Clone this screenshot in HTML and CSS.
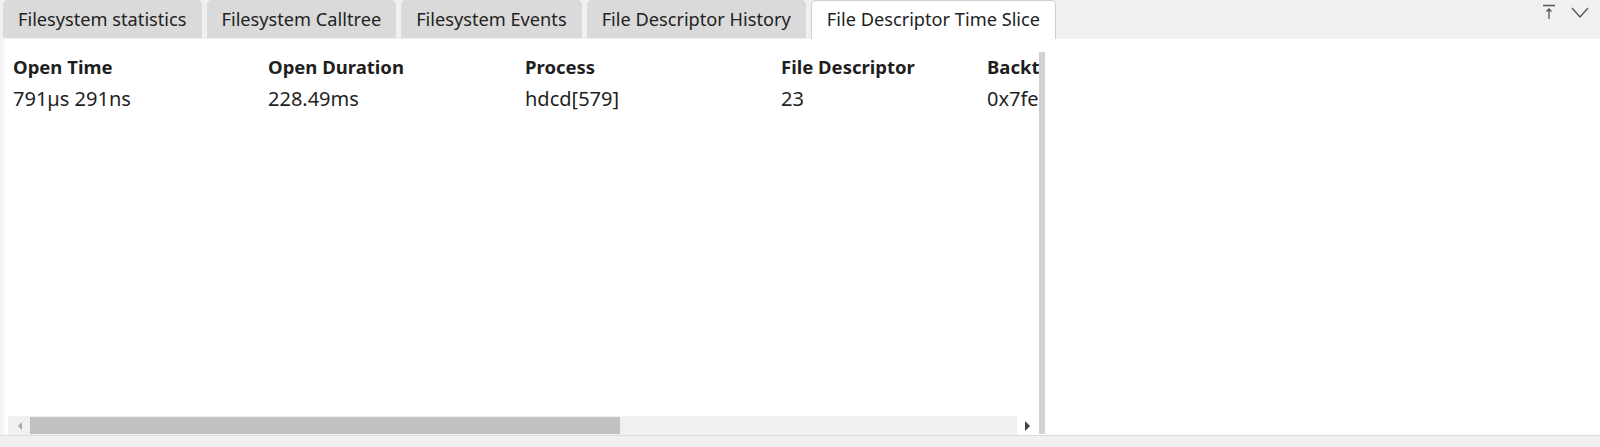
FILE: index.html
```html
<!DOCTYPE html>
<html>
<head>
<meta charset="utf-8">
<link rel="stylesheet" href="styles.css">
</head>
<body>
<div class="tabbar">
  <div class="tab">Filesystem statistics</div>
  <div class="tab">Filesystem Calltree</div>
  <div class="tab">Filesystem Events</div>
  <div class="tab">File Descriptor History</div>
  <div class="tab active">File Descriptor Time Slice</div>
  <div class="tools">
    <svg width="18" height="18" viewBox="0 0 18 18"><path d="M3 2.5h12M9 16V6M6.5 8.5L9 6l2.5 2.5" fill="none" stroke="#555" stroke-width="1.3"/></svg>
    <svg width="20" height="18" viewBox="0 0 20 18"><path d="M2 5l8 9 8-9" fill="none" stroke="#555" stroke-width="1.3"/></svg>
  </div>
</div>
<div class="main">
  <div class="edge"></div>
  <div class="pane">
    <div class="table">
      <div class="row head">
        <div class="c c1">Open Time</div>
        <div class="c c2">Open Duration</div>
        <div class="c c3">Process</div>
        <div class="c c4">File Descriptor</div>
        <div class="c c5">Backt</div>
      </div>
      <div class="row">
        <div class="c c1">791µs 291ns</div>
        <div class="c c2">228.49ms</div>
        <div class="c c3">hdcd[579]</div>
        <div class="c c4">23</div>
        <div class="c c5">0x7fe</div>
      </div>
    </div>
    <div class="hscroll">
      <div class="arrow left"></div>
      <div class="thumb"></div>
      <div class="rest"></div>
      <div class="arrow right"></div>
    </div>
  </div>
  <div class="splitter"></div>
  <div class="right"></div>
</div>
<div class="status"></div>
</body>
</html>
```
FILE: styles.css
```css
html, body {
  margin: 0;
  padding: 0;
  background: #ffffff;
  width: 1600px;
  height: 447px;
  overflow: hidden;
  font-family: "Noto Sans", "Open Sans", sans-serif;
  color: #1f1f1f;
}
.tabbar {
  height: 39px;
  background: #f0f0f0;
  display: flex;
  align-items: flex-start;
  padding-left: 3px;
  gap: 5px;
  box-sizing: border-box;
}
.tab {
  height: 38px;
  box-sizing: border-box;
  background: #dadada;
  border-radius: 5px 5px 0 0;
  padding: 0 15px;
  font-size: 18.2px;
  line-height: 38px;
  color: #222;
  white-space: nowrap;
}
.tab.active {
  background: #ffffff;
  height: 39px;
  border: 1px solid #cfcfcf;
  border-bottom: none;
  line-height: 37px;
  padding: 0 15px;
}
.tools {
  margin-left: auto;
  display: flex;
  gap: 12px;
  padding: 3px 10px 0 0;
}
.main {
  display: flex;
  height: 396px;
}
.edge {
  flex: none;
  width: 8px;
  background: linear-gradient(to right, #f2f2f2, #fbfbfb 60%, #ffffff);
}
.pane {
  flex: none;
  width: 1031px;
  min-width: 0;
  display: flex;
  flex-direction: column;
  overflow: hidden;
}
.table {
  flex: 1;
  overflow: hidden;
  padding-top: 13px;
}
.row {
  display: flex;
  height: 33px;
  line-height: 33px;
  font-size: 20px;
  white-space: nowrap;
}
.row.head {
  font-weight: bold;
  font-size: 18.5px;
  height: 30px;
  line-height: 30px;
}
.c {
  flex: none;
  padding-left: 5px;
  overflow: hidden;
}
.c1 { width: 250px; }
.c2 { width: 252px; }
.c3 { width: 251px; }
.c4 { width: 201px; }
.c5 { width: 100px; }
.hscroll {
  flex: none;
  width: 1031px;
  height: 19px;
  background: #f0f0f0;
  display: grid;
  grid-template-columns: 22px 590px 1fr 22px;
}
.arrow {
  position: relative;
}
.arrow.left::after {
  content: "";
  position: absolute;
  left: 10px;
  top: 6px;
  border-right: 4px solid #a6a6a6;
  border-top: 4px solid transparent;
  border-bottom: 4px solid transparent;
}
.arrow.right::after {
  content: "";
  position: absolute;
  left: 8px;
  top: 5px;
  border-left: 5px solid #404040;
  border-top: 5px solid transparent;
  border-bottom: 5px solid transparent;
}
.thumb {
  background: #c1c1c1;
  margin: 1px 0;
}
.splitter {
  flex: none;
  width: 6px;
  background: #d2d2d2;
  margin-top: 13px;
  margin-bottom: 1px;
}
.right {
  flex: 1;
  background: #ffffff;
}
.status {
  height: 12px;
  background: #f0f0f0;
  border-top: 1px solid #dcdcdc;
}
```
